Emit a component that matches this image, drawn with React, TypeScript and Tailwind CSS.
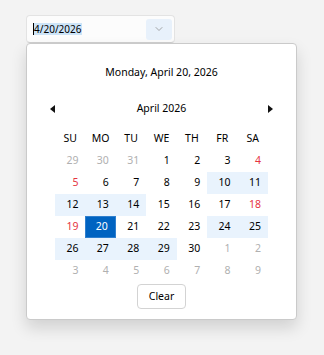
import { ChevronDown } from "lucide-react";

type Day = { n: number; muted?: boolean; red?: boolean; hl?: boolean; sel?: boolean };

const heads = ["SU", "MO", "TU", "WE", "TH", "FR", "SA"];

// April 2026 grid, with the bolded/range days the control shows
const weeks: Day[][] = [
  [{ n: 29, muted: true }, { n: 30, muted: true }, { n: 31, muted: true }, { n: 1 }, { n: 2 }, { n: 3 }, { n: 4, red: true }],
  [{ n: 5, red: true }, { n: 6 }, { n: 7 }, { n: 8 }, { n: 9 }, { n: 10, hl: true }, { n: 11, hl: true }],
  [{ n: 12, hl: true }, { n: 13, hl: true }, { n: 14, hl: true }, { n: 15 }, { n: 16 }, { n: 17 }, { n: 18, red: true }],
  [{ n: 19, red: true }, { n: 20, sel: true }, { n: 21 }, { n: 22 }, { n: 23 }, { n: 24, hl: true }, { n: 25, hl: true }],
  [{ n: 26, hl: true }, { n: 27, hl: true }, { n: 28, hl: true }, { n: 29, hl: true }, { n: 30 }, { n: 1, muted: true }, { n: 2, muted: true }],
  [{ n: 3, muted: true }, { n: 4, muted: true }, { n: 5, muted: true }, { n: 6, muted: true }, { n: 7, muted: true }, { n: 8, muted: true }, { n: 9, muted: true }],
];

function Cell({ d }: { d: Day }) {
  let cls = "h-[22px] flex items-center justify-end pr-[7px]";
  if (d.sel) cls += " bg-[#0063c1] text-white border border-[#2f7fce]";
  else if (d.hl) cls += " bg-[#e9f3fd]";
  if (!d.sel) {
    if (d.muted) cls += " text-[#b0b0b0]";
    else if (d.red) cls += " text-[#e5343f]";
    else cls += " text-black";
  }
  return <div className={cls}>{d.n}</div>;
}

export default function App() {
  return (
    <div
      className="w-[324px] h-[355px] bg-[#f3f3f3] pt-[15px] pl-[26px] text-[10.5px] text-black"
      style={{ fontFamily: '"Noto Sans", "Open Sans", sans-serif' }}
    >
      {/* date input */}
      <div className="w-[149px] h-[28px] rounded-[4px] border border-[#e3e3e3] border-b-[#cfcfcf] bg-[#fcfcfc] flex items-center pl-[6px] pr-[2px]">
        <div className="flex-1 flex items-center text-[10px]">
          <span className="w-px h-[12px] bg-black" />
          <span className="bg-[#cde4f7] leading-[12px] pr-px">4/20/2026</span>
        </div>
        <div className="w-[26px] h-[21px] rounded-[3px] bg-[#e8f1fb] flex items-center justify-center">
          <ChevronDown className="w-[12px] h-[12px] text-[#8a8a8a]" strokeWidth={1.5} />
        </div>
      </div>

      {/* dropdown calendar */}
      <div className="w-[271px] h-[277px] rounded-[4px] border border-[#cacaca] bg-white shadow-[0_8px_16px_rgba(0,0,0,0.14)] flex flex-col items-center">
        <div className="h-[58px] flex items-center justify-center">Monday, April 20, 2026</div>
        <div className="w-full h-[14px] flex items-center justify-between px-[22px]">
          <svg width="8" height="8" viewBox="0 0 8 8">
            <polygon points="6,0 6,8 1,4" fill="#111" />
          </svg>
          <span>April 2026</span>
          <svg width="8" height="8" viewBox="0 0 8 8">
            <polygon points="2,0 2,8 7,4" fill="#111" />
          </svg>
        </div>
        <div className="w-[213px] grid grid-cols-7 mt-[12px]">
          {heads.map((h) => (
            <div key={h} className="h-[22px] flex items-center justify-center">
              {h}
            </div>
          ))}
          {weeks.flat().map((d, i) => (
            <Cell key={i} d={d} />
          ))}
        </div>
        <button className="mt-[2px] w-[49px] h-[25px] rounded-[4px] border border-[#d3d3d3] bg-white text-[10.5px]">
          Clear
        </button>
      </div>
    </div>
  );
}
